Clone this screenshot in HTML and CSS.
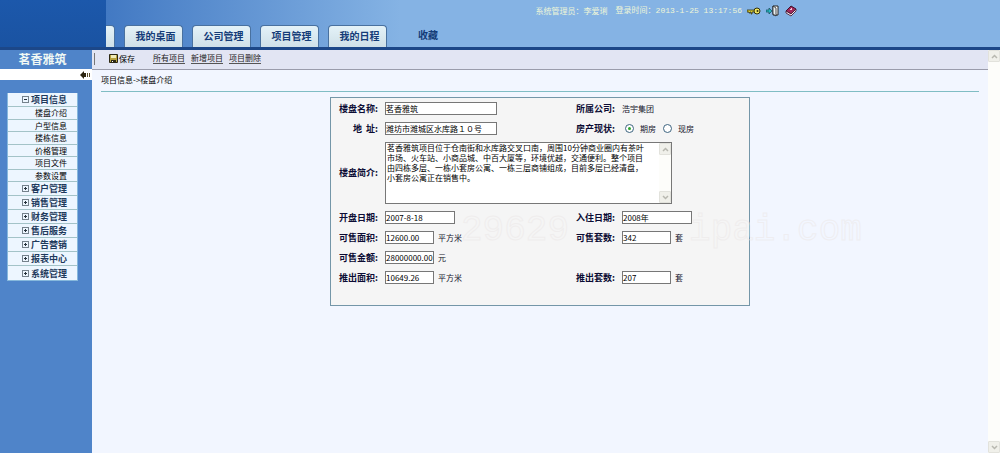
FILE: index.html
```html
<!DOCTYPE html>
<html lang="zh-CN">
<head>
<meta charset="utf-8">
<title>茗香雅筑 - 项目信息</title>
<link rel="stylesheet" href="styles.css">
</head>
<body>
<div class="app">
  <header class="banner">
    <div class="brand-block"></div>
    <nav class="tabs">
      <span class="tab-stub"></span>
      <a class="tab" href="#">我的桌面</a>
      <a class="tab" href="#">公司管理</a>
      <a class="tab" href="#">项目管理</a>
      <a class="tab" href="#">我的日程</a>
      <a class="tab-plain" href="#">收藏</a>
    </nav>
    <div class="session">
      <span>系统管理员：李爱琍</span>
      <span class="login-time">登录时间：<time>2013-1-25 13:17:56</time></span>
      <a class="tool" href="#" aria-label="修改密码"><svg width="14" height="10" viewBox="0 0 14 10"><path d="M0 4h8v2H5v2H4V6H3v1H2V6H0z" fill="#d8cf3a" stroke="#33300c" stroke-width=".8"/><circle cx="10" cy="5" r="3" fill="#f0e860" stroke="#33300c"/><circle cx="10.5" cy="5" r="1" fill="#33300c"/></svg></a>
      <a class="tool" href="#" aria-label="退出"><svg width="14" height="12" viewBox="0 0 14 12"><path d="M7 1h5v9H7z" fill="#fff" stroke="#222"/><path d="M7 1l3 2v8l-3-2z" fill="#e8eef0" stroke="#222" stroke-width=".8"/><path d="M0 5h3V3l3 3-3 3V7H0z" fill="#25b5c0" stroke="#144a58" stroke-width=".7"/></svg></a>
      <a class="tool" href="#" aria-label="帮助"><svg width="12" height="12" viewBox="0 0 12 12"><path d="M1 6l5-5 5 3-5 5z" fill="#a0285c" stroke="#401028"/><path d="M1 6v2l5 3 5-5V4L6 9z" fill="#f4e8ee" stroke="#401028" stroke-width=".8"/><path d="M5 5l2-2M6 5l1-1" stroke="#f0c8d8"/></svg></a>
    </div>
  </header>

  <div class="body">
    <aside class="sidebar">
      <h1 class="project">茗香雅筑</h1>
      <div class="collapse-bar">
        <button class="collapse" aria-label="收起菜单"><svg width="10" height="8" viewBox="0 0 10 8"><path d="M0 4l4-4v2h2v4H4v2z" fill="#2c2410"/><path d="M7 2h1v4H7zM9 2h1v4H9z" fill="#5c4c28"/></svg></button>
      </div>
      <nav class="menu">
        <a class="group" href="#"><span class="box minus"></span>项目信息</a>
        <div class="submenu">
          <a href="#">楼盘介绍</a>
          <a href="#">户型信息</a>
          <a href="#">楼栋信息</a>
          <a href="#">价格管理</a>
          <a href="#">项目文件</a>
          <a href="#">参数设置</a>
        </div>
        <a class="group" href="#"><span class="box plus"></span>客户管理</a>
        <a class="group" href="#"><span class="box plus"></span>销售管理</a>
        <a class="group" href="#"><span class="box plus"></span>财务管理</a>
        <a class="group" href="#"><span class="box plus"></span>售后服务</a>
        <a class="group" href="#"><span class="box plus"></span>广告营销</a>
        <a class="group" href="#"><span class="box plus"></span>报表中心</a>
        <a class="group" href="#"><span class="box plus"></span>系统管理</a>
      </nav>
    </aside>

    <main class="main">
      <div class="toolbar">
        <button class="save"><svg width="9" height="9" viewBox="0 0 9 9"><path d="M.5.5h8v8h-8z" fill="#b8a23c" stroke="#2c2814"/><path d="M2 1h5v3H2z" fill="#f2ecb8"/><path d="M2 6h5v3H2z" fill="#2c2814"/><path d="M3 7h1v1H3z" fill="#fff"/></svg>保存</button>
        <a href="#">所有项目</a>
        <a href="#">新增项目</a>
        <a href="#">项目删除</a>
      </div>
      <div class="crumb">项目信息-&gt;楼盘介绍</div>
      <form class="panel">
        <div class="watermark" aria-hidden="true"><span>29629</span><span>ipai.com</span></div>
        <label for="name">楼盘名称:</label>
        <div class="field"><input class="long" id="name" value="茗香雅筑"></div>
        <span class="label">所属公司:</span>
        <div class="field">浩宇集团</div>

        <label for="addr">地&nbsp;&nbsp;址:</label>
        <div class="field"><input class="long" id="addr" value="潍坊市潍城区水库路１０号"></div>
        <span class="label">房产现状:</span>
        <div class="field radios">
          <label class="choice"><input type="radio" name="state" checked>期房</label>
          <label class="choice"><input type="radio" name="state">现房</label>
        </div>

        <label for="intro">楼盘简介:</label>
        <div class="field intro">
          <textarea id="intro">茗香雅筑项目位于仓南街和水库路交叉口南，周围10分钟商业圈内有茶叶
市场、火车站、小商品城、中百大厦等，环境优越，交通便利。整个项目
由四栋多层、一栋小套房公寓、一栋三层商铺组成，目前多层已经清盘，
小套房公寓正在销售中。</textarea>
          <div class="scroll">
            <span class="arrow"><svg width="7" height="5" viewBox="0 0 7 5"><path d="M1 4l2.500-2.500L6 4" fill="none" stroke="#b8b8b0" stroke-width="1.500"/></svg></span>
            <span class="arrow"><svg width="7" height="5" viewBox="0 0 7 5"><path d="M1 1l2.500 2.500L6 1" fill="none" stroke="#b8b8b0" stroke-width="1.500"/></svg></span>
          </div>
        </div>

        <label for="open">开盘日期:</label>
        <div class="field"><input class="mid" id="open" value="2007-8-18"></div>
        <label for="movein">入住日期:</label>
        <div class="field"><input class="mid" id="movein" value="2008年"></div>

        <label for="area">可售面积:</label>
        <div class="field"><input class="short" id="area" value="12600.00">平方米</div>
        <label for="units">可售套数:</label>
        <div class="field"><input class="short" id="units" value="342">套</div>

        <label for="amount">可售金额:</label>
        <div class="field wide"><input class="short" id="amount" value="28000000.00">元</div>

        <label for="outarea">推出面积:</label>
        <div class="field"><input class="short" id="outarea" value="10649.26">平方米</div>
        <label for="outunits">推出套数:</label>
        <div class="field"><input class="short" id="outunits" value="207">套</div>
      </form>
    </main>

    <div class="scroll page-scroll">
      <span class="arrow"><svg width="7" height="5" viewBox="0 0 7 5"><path d="M1 4l2.500-2.500L6 4" fill="none" stroke="#b8b8b0" stroke-width="1.500"/></svg></span>
      <span class="arrow"><svg width="7" height="5" viewBox="0 0 7 5"><path d="M1 1l2.500 2.500L6 1" fill="none" stroke="#b8b8b0" stroke-width="1.500"/></svg></span>
    </div>
  </div>
</div>
</body>
</html>
```
FILE: styles.css
```css
* { box-sizing: border-box; }
body, input, textarea, button {
  font-family: "Noto Sans CJK SC", "Liberation Sans", sans-serif;
  font-size: 8px;
  line-height: 12px;
  color: #000;
}
body { margin: 0; background: #f2f6ff; }
a { color: inherit; text-decoration: none; }
svg { display: block; }

.app { display: flex; flex-direction: column; min-height: 100vh; }

.banner {
  display: flex;
  height: 50px;
  border-bottom: 3px solid #1c4788;
  background: linear-gradient(90deg, #4279c3 106px, #85b3e4 400px);
}
.brand-block { width: 106px; background: linear-gradient(#1c58ab, #1a53a2); }
.tabs { flex: 1; display: flex; align-items: flex-end; gap: 9px; }
.tab, .tab-stub {
  height: 22px;
  border: 1px solid #49719f;
  border-bottom: 0;
  border-radius: 4px 4px 0 0;
  background: linear-gradient(#e4f2f8, #cfe0e8);
}
.tab, .tab-plain {
  font-size: 10px;
  font-weight: bold;
  line-height: 20px;
  color: #143c78;
  text-align: center;
}
.tab { width: 59px; padding-left: 4px; }
.tab-stub { width: 9px; border-left: 0; border-radius: 0 4px 0 0; }
.tab-plain { padding-left: 22px; padding-bottom: 2px; }
.session {
  display: flex;
  align-items: center;
  gap: 5px;
  height: 21px;
  padding-right: 203px;
  color: #eef6d8;
}
.session time { font-family: "Liberation Mono", monospace; }
.login-time { margin-left: 3px; }

.body { flex: 1; display: flex; }

.sidebar { width: 92px; background: #4f84c9; }
.project {
  margin: 0;
  height: 19px;
  padding-right: 7px;
  font-size: 12px;
  line-height: 18px;
  text-align: center;
  color: #f0f8f4;
}
.collapse-bar {
  display: flex;
  justify-content: flex-end;
  align-items: center;
  height: 11px;
  padding-right: 2px;
  background: #fff;
}
.collapse { padding: 0; border: 0; background: none; }
.menu {
  margin: 13px 14px 0 7px;
  border: 1px solid #86b8dc;
  border-top: 0;
  background: #edf6ff;
}
.menu a {
  display: flex;
  align-items: center;
  justify-content: flex-end;
  padding-right: 10px;
  border-bottom: 1px solid #a3c3c8;
  line-height: 11px;
}
.menu .group { height: 14px; font-size: 9px; font-weight: bold; color: #1f3a5c; }
.menu .group:last-child { border-bottom: 0; }
.submenu { display: grid; grid-auto-rows: 1fr; height: 75px; }
.box {
  display: grid;
  place-items: center;
  width: 5px;
  height: 5px;
  margin-right: 3px;
  outline: 1px solid #75828c;
}
.box::before { content: ""; grid-area: 1 / 1; width: 3px; height: 1px; background: #26323c; }
.plus::after { content: ""; grid-area: 1 / 1; width: 1px; height: 3px; background: #26323c; }

.main { flex: 1; min-width: 0; }
.toolbar {
  display: flex;
  align-items: center;
  gap: 6px;
  height: 20px;
  padding: 0 2px 2px;
  border-bottom: 1px solid #9a9cab;
  background: #e2e5f3;
}
.toolbar a { border-bottom: 1px solid #555; line-height: 10px; color: #222; }
.save {
  display: flex;
  align-items: center;
  gap: 1px;
  margin-right: 12px;
  padding: 0 0 0 14px;
  border: 0;
  border-left: 1px solid #777;
  background: none;
}
.crumb { margin: 0 9px; padding: 4px 0 5px; border-bottom: 1px solid #80bdc4; }

.panel {
  position: relative;
  display: grid;
  grid-template-columns: 41px 182px 41px 1fr;
  gap: 7px;
  width: 420px;
  margin: 5px auto 0;
  padding: 4px 6px 21px;
  border: 1px solid #7496a8;
  background: #f5f5f5;
}
.panel > label, .label {
  align-self: center;
  font-size: 9px;
  font-weight: bold;
  line-height: 12px;
  color: #0c0c34;
  text-align: right;
  white-space: nowrap;
}
.watermark {
  position: absolute;
  top: 115px;
  left: 130px;
  display: flex;
  gap: 120px;
  font: 36px/36px "Liberation Mono", monospace;
  color: transparent;
  -webkit-text-stroke: 1px rgba(236, 232, 232, .6);
  pointer-events: none;
}
.field { display: flex; align-items: center; gap: 4px; height: 13px; color: #14142c; }
.field.wide { grid-column: span 3; }
.field input:not([type="radio"]) {
  height: 13px;
  margin: 0;
  padding: 0;
  border: 1px solid #777;
  border-radius: 0;
  background: #fff;
}
.long { width: 112px; }
.mid { width: 70px; }
.short { width: 49px; }
.radios { gap: 7px; padding-left: 3px; }
.choice { display: flex; align-items: center; gap: 6px; }
.choice input {
  appearance: none;
  display: grid;
  place-items: center;
  width: 9px;
  height: 9px;
  margin: 0;
  border: 1px solid #3d6480;
  border-radius: 50%;
  background: #fff;
}
.choice input:checked::before {
  content: "";
  width: 3px;
  height: 3px;
  border-radius: 50%;
  background: #2ca52c;
}
.intro {
  grid-column: span 3;
  align-items: stretch;
  gap: 0;
  width: 287px;
  height: 62px;
  border: 1px solid #777;
  background: #fff;
}
.intro textarea {
  flex: 1;
  min-width: 0;
  margin: 0;
  padding: 0 1px;
  border: 0;
  background: none;
  line-height: 10px;
  white-space: pre;
  overflow: hidden;
  resize: none;
}
.scroll {
  display: flex;
  flex-direction: column;
  justify-content: space-between;
  width: 12px;
  background: #fdfdfa;
}
.arrow {
  display: grid;
  place-items: center;
  height: 12px;
  border: 1px solid #e2e2dc;
  border-radius: 1px;
  background: #f0f0ea;
}
```
